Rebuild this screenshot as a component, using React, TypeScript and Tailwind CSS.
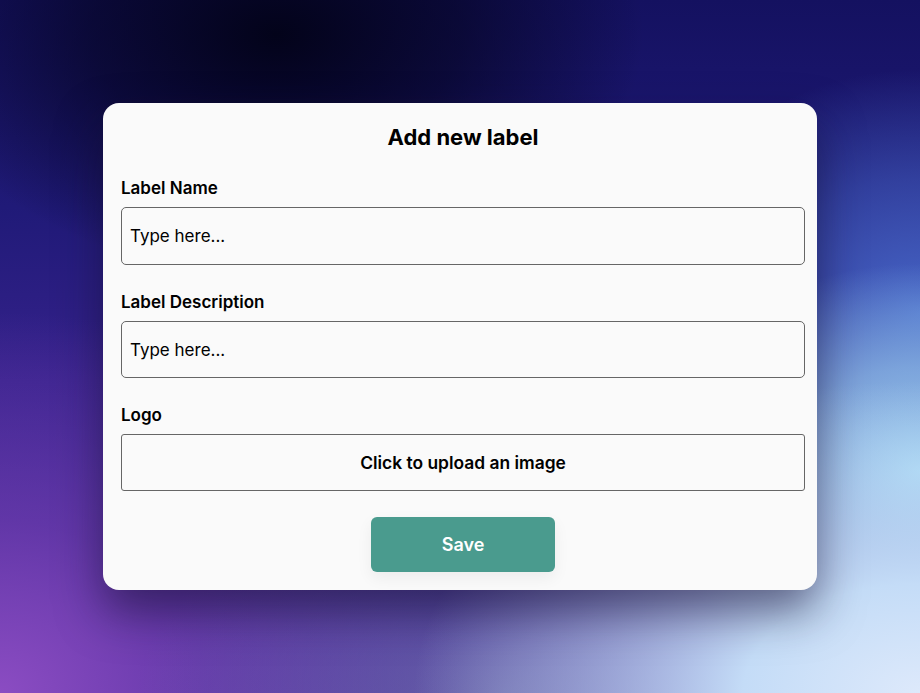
import React from "react";

export default function App() {
  return (
    <div
      className="w-[920px] h-[693px] flex items-center justify-center overflow-hidden bg-[radial-gradient(ellipse_40%_35%_at_30%_5%,#03031a_0%,rgba(3,3,26,0.6)_50%,transparent_100%),radial-gradient(ellipse_55%_45%_at_100%_100%,#dde9fb_0%,#c4dcf7_35%,transparent_100%),radial-gradient(ellipse_30%_30%_at_100%_68%,#a2d6f2_0%,rgba(162,214,242,0.6)_50%,transparent_100%),radial-gradient(ellipse_30%_35%_at_100%_45%,#4566c6_0%,rgba(69,102,198,0.5)_55%,transparent_100%),radial-gradient(ellipse_40%_30%_at_55%_100%,rgba(110,110,170,0.8)_0%,transparent_100%),radial-gradient(ellipse_50%_55%_at_0%_100%,#8b4cc2_0%,rgba(120,64,180,0.6)_45%,transparent_100%),linear-gradient(180deg,#141160_0%,#201a78_30%,#36228c_55%,#4a2f9e_100%)]"
      style={{ fontFamily: "Inter, 'Noto Sans', sans-serif" }}
    >
      <div className="w-[714px] h-[487px] bg-[#fafafa] rounded-[16px] pt-[19px] pl-[18px] pr-[12px] pb-[18px] flex flex-col shadow-[0_22px_45px_rgba(20,15,50,0.55)]">
        <h1 className="text-[22px] leading-[30px] font-bold text-black text-center">Add new label</h1>
        <label className="mt-[24px] text-[17px] leading-[24px] font-semibold text-black">Label Name</label>
        <div className="mt-[7px] h-[58px] border border-[#666666] rounded-[5px] flex items-center px-[8px] pt-[2px] text-[17px] text-black">
          Type here...
        </div>
        <label className="mt-[25px] text-[17px] leading-[24px] font-semibold text-black">Label Description</label>
        <div className="mt-[7px] h-[58px] border border-[#666666] rounded-[5px] flex items-center px-[8px] pt-[2px] text-[17px] text-black">
          Type here...
        </div>
        <label className="mt-[25px] text-[17px] leading-[24px] font-semibold text-black">Logo</label>
        <div className="mt-[7px] h-[57px] border border-[#666666] rounded-[3px] flex items-center justify-center text-[17.4px] font-semibold text-black">
          Click to upload an image
        </div>
        <div className="mt-[26px] flex justify-center">
          <button className="w-[184px] h-[55px] rounded-[6px] bg-[#4a9b8e] text-white text-[18px] font-semibold shadow-[0_6px_16px_rgba(0,0,0,0.06)]">
            Save
          </button>
        </div>
      </div>
    </div>
  );
}
